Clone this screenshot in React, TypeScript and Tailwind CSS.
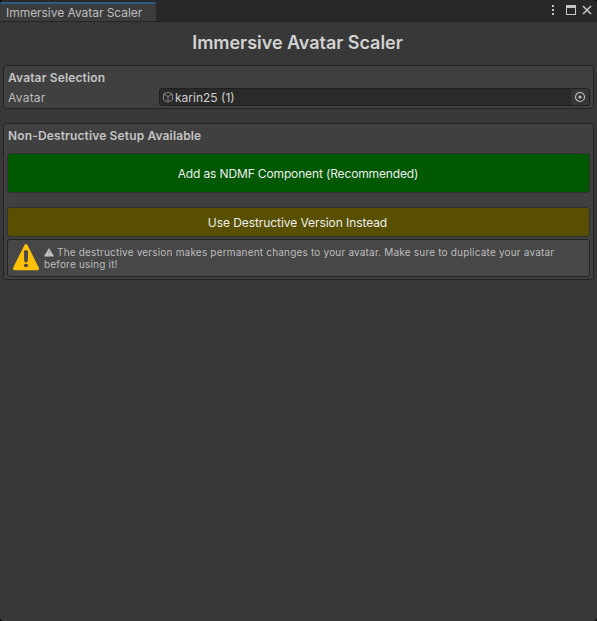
import React from "react";

function WarningIcon() {
  return (
    <svg width="28" height="28" viewBox="0 0 28 28" className="shrink-0">
      <path d="M13 1.700 L25.300 24.500 H1.900 Z M15 1.700 L26 24.500 H2 Z" fill="#ffc107" />
      <path d="M14 2 L25.200 24.500 H2.700 Z" fill="#ffc107" stroke="#ffc107" strokeWidth="3.600" strokeLinejoin="round" />
      <path d="M11.900 7.600 Q11.900 6.200 14 6.200 Q16.100 6.200 16.100 7.600 L15.700 17 Q15.600 18.400 14 18.400 Q12.400 18.400 12.300 17 Z" fill="#474747" />
      <ellipse cx="14" cy="21.500" rx="2.200" ry="1.700" fill="#474747" />
    </svg>
  );
}

function SmallWarning() {
  return (
    <svg width="10" height="9" viewBox="0 0 10 9" className="mr-[3px] inline-block align-[-1px]">
      <path d="M5 0.500 L9.600 8.200 H0.400 Z" fill="#c4c4c4" stroke="#c4c4c4" strokeWidth="0.5" strokeLinejoin="round" />
      <path d="M5 3v2.700M5 6.600v1" stroke="#858585" strokeWidth="0.8" />
    </svg>
  );
}

function TitleBar() {
  return (
    <header className="flex h-[21px] items-start justify-between bg-[#282828]">
      <div className="mt-0.5 h-[19px] w-[156px] rounded-t-[2px] border-t-2 border-[#2c5d87] bg-[#3c3c3c] pl-1.5 text-[12px] leading-[18px] tracking-[-0.04px] whitespace-nowrap text-[#bdbdbd]">
        Immersive Avatar Scaler
      </div>
      <svg width="49" height="21" viewBox="0 0 49 21" fill="none" shapeRendering="crispEdges">
        <path d="M4 5h2v2H4zM4 9h2v2H4zM4 13h2v2H4z" fill="#c4c4c4" />
        <path d="M18.5 5.5h9v9h-9z" stroke="#c4c4c4" />
        <path d="M18 5h10v3H18z" fill="#c4c4c4" />
        <path d="m35 6 8 8m0-8-8 8" stroke="#c4c4c4" strokeWidth="1.6" shapeRendering="auto" />
      </svg>
    </header>
  );
}

function ObjectField() {
  return (
    <div className="flex h-[18px] w-[431px] shrink-0 items-center overflow-hidden rounded-[3px] border border-[#202020] bg-[#2a2a2a]">
      <svg width="11" height="12" viewBox="0 0 11 12" fill="none" stroke="#858585" className="ml-[3px]">
        <path d="M5 1.200 9.500 3.200v5.600L5 11 0.500 8.800V3.200ZM0.500 3.200l4.500 2.300L9.500 3.200M5 5.500V11" />
      </svg>
      <span className="ml-px flex-1 pt-px text-[12px] leading-4 text-[#d0d0d0]">karin25 (1)</span>
      <div className="flex h-4 w-[18px] items-center justify-center bg-[#373737]">
        <svg width="12" height="12" viewBox="0 0 12 12" fill="none">
          <circle cx="6" cy="6" r="4.500" stroke="#c4c4c4" strokeWidth="1.1" />
          <circle cx="6" cy="6" r="1.500" fill="#c4c4c4" />
        </svg>
      </div>
    </div>
  );
}

export default function App() {
  return (
    <div className="h-[621px] w-[597px] bg-black font-['Inter',sans-serif] text-[#c4c4c4]">
      <div className="h-full overflow-hidden rounded-[4px] bg-[#383838]">
        <TitleBar />
        <main className="border-t border-[#242424] px-[3px]">
          <h1 className="h-[43px] pr-[2px] text-center text-[18px] leading-[42px] font-semibold tracking-[-0.04px] text-[#d2d2d2]">
            Immersive Avatar Scaler
          </h1>
          <section className="h-11 w-[591px] rounded-[3px] border border-[#242424] bg-[#404040] px-[4px] pt-[2px] text-[12px]">
            <h2 className="h-5 leading-5 font-semibold tracking-[0.14px]">Avatar Selection</h2>
            <div className="flex h-[18px]">
              <span className="w-[151px] shrink-0 pt-px leading-[18px] tracking-[0.25px] text-[#bdbdbd]">Avatar</span>
              <ObjectField />
            </div>
          </section>
          <section className="mt-3.5 h-[157px] w-[591px] rounded-[3px] border border-[#242424] bg-[#404040] px-[3px] pt-[2px]">
            <h2 className="h-[27px] pl-px text-[12px] leading-5 font-semibold tracking-[0.14px]">
              Non-Destructive Setup Available
            </h2>
            <button className="block h-10 w-[583px] rounded-[3px] border border-[#303030] bg-[#005800] pt-[2px] pr-px text-[12px] tracking-[-0.14px] text-[#eeeeee]">
              Add as NDMF Component (Recommended)
            </button>
            <button className="mt-3.5 block h-[30px] w-[583px] rounded-[3px] border border-[#303030] bg-[#585000] pt-[2px] pr-[2px] text-[12px] tracking-[-0.07px] text-[#eeeeee]">
              Use Destructive Version Instead
            </button>
            <div className="mt-0.5 flex h-[38px] w-[583px] items-center rounded-[3px] border border-[#242424] bg-[#474747] pl-1">
              <WarningIcon />
              <p className="ml-1 text-[10px] leading-3 tracking-[0.19px] text-[#bdbdbd]">
                <SmallWarning />The destructive version makes permanent changes to your avatar. Make sure to duplicate your avatar
                <br />
                before using it!
              </p>
            </div>
          </section>
        </main>
      </div>
    </div>
  );
}
